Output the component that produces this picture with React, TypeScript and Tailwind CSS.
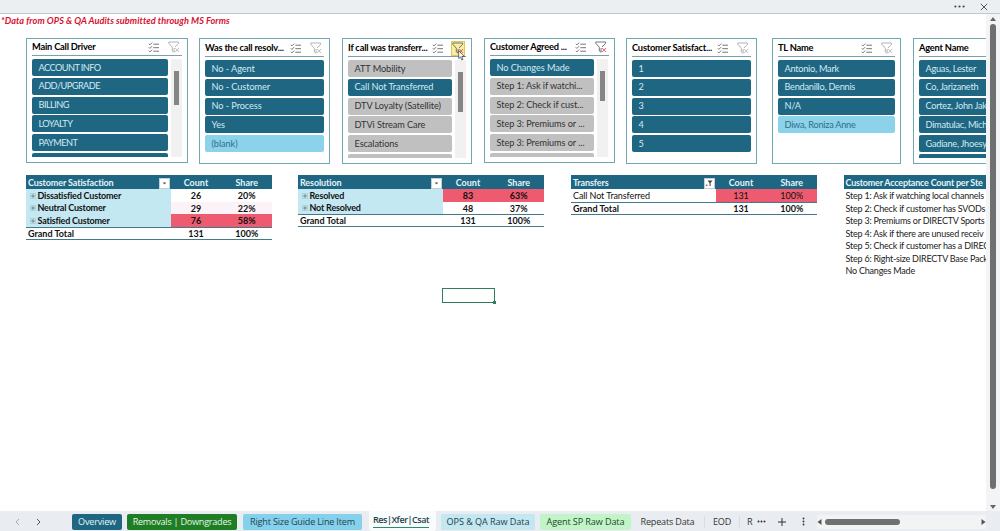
import React from "react";
import clsx from "clsx";

type State = "on" | "off" | "empty";

type SlicerProps = {
  title: string;
  items: [string, State][];
  className: string;
  listClassName: string;
  more?: "on" | "off";
  thumb?: string;
  filtered?: boolean;
  hovered?: boolean;
};

const itemColors = {
  on: "bg-[#1e6682] text-[#d3eaf2]",
  off: "bg-[#c0c0c0] text-[#333333]",
  empty: "bg-[#8bd2ea] text-[#2e7187]",
};

const MultiSelectIcon = () => (
  <svg viewBox="0 0 12 11" className="w-3 h-[11px] shrink-0" fill="none" stroke="#666" strokeWidth="0.9">
    <path d="M.8 1.8l1.1 1.1L4.2.6M.8 5.3l1.1 1.1 2.3-2.3M.8 8.8l1.1 1.1 2.3-2.3" />
    <path d="M5.3 2.2H11M5.3 5.7H11M5.3 9.2H11" />
  </svg>
);

const ClearFilterIcon = ({ active }: { active?: boolean }) => (
  <svg viewBox="0 0 12 12" className="w-3 h-3 shrink-0" fill="none" strokeWidth="0.9">
    <path d="M.8 1h9.8v1.3L7 6M.8 1v1.3l3.5 3.9V10l1.8 1.2V7" stroke={active ? "#666" : "#aaa"} />
    <path d="M7.2 7l3.9 4M11.1 7L7.2 11" stroke={active ? "#df4b62" : "#b5b5b5"} />
  </svg>
);

const Slicer = ({ title, items, className, listClassName, more, thumb, filtered, hovered }: SlicerProps) => (
  <div className={clsx("shrink-0 border border-[#6fa8ae] bg-white px-[5px]", className)}>
    <div className="relative flex items-center h-[17px] border-b border-[#7d9eaa] pr-px">
      <span className="flex-1 whitespace-nowrap text-[9.3px] font-bold tracking-[-0.22px] text-black">{title}</span>
      <MultiSelectIcon />
      <span
        className={clsx(
          "ml-[7px] flex h-[15px] w-[14px] shrink-0 items-center justify-center",
          hovered && "bg-[#f8eea0] border border-[#dcc95c]"
        )}
      >
        <ClearFilterIcon active={filtered} />
      </span>
      {hovered && (
        <svg viewBox="0 0 7 11" className="absolute right-[1px] top-[10px] z-10 w-[7px] h-[11px]">
          <path d="M.7.6v8l1.8-1.7 1.2 3 1.3-.6-1.2-2.8h2.5z" fill="white" stroke="#333" strokeWidth="0.7" />
        </svg>
      )}
    </div>
    <div className="flex mt-[3px]">
      <div className={clsx("flex flex-col gap-[1.8px] overflow-hidden tracking-[-0.08px]", listClassName)}>
        {items.map(([label, state], i) => (
          <div
            key={i}
            className={clsx(
              "flex h-[17px] shrink-0 items-center whitespace-nowrap rounded-[2px] pl-[6.5px] text-[9.2px]",
              itemColors[state]
            )}
          >
            {label}
          </div>
        ))}
        {more && <div className={clsx("h-1 shrink-0 rounded-t-[2px]", itemColors[more])} />}
      </div>
      {thumb && (
        <div className="ml-[3px] w-[11px] bg-[#f1f1f1]">
          <div className={clsx("mx-auto w-[4.5px] bg-[#858585]", thumb)} />
        </div>
      )}
    </div>
  </div>
);

type Row = { label: string; count: string; share: string; heat: string };

const Pivot = ({
  title,
  rows,
  total,
  grouped,
  className,
}: {
  title: string;
  rows: Row[];
  total: string;
  grouped?: boolean;
  className: string;
}) => (
  <div className={clsx("w-[246px] shrink-0 text-[9px] leading-[14px] text-[#111]", className)}>
    <div className="grid grid-cols-[144.5px_51px_50.5px] h-[14px] items-center bg-[#1e6682] font-bold text-[#e4f5fa]">
      <div className="flex items-center justify-between pl-[2px] pt-px tracking-[-0.12px]">
        {title}
        <span className="mr-px flex h-[11px] w-[11px] items-center justify-center border border-[#c5ced2] bg-white">
          {grouped ? (
            <svg viewBox="0 0 6 6" className="w-[5px] h-[5px]">
              <path d="M.8 1.8h4.4L3 4.2z" fill="#555" />
            </svg>
          ) : (
            <svg viewBox="0 0 8 8" className="w-2 h-2">
              <path d="M2.5 1.5h5L5.6 4v3H4.5V4z" fill="#444" />
              <path d="M.5 5.8h2.4L1.7 7.2z" fill="#444" />
            </svg>
          )}
        </span>
      </div>
      <div className="pt-px text-center">Count</div>
      <div className="pt-px text-center">Share</div>
    </div>
    {rows.map((row) => (
      <div
        key={row.label}
        className={clsx("grid grid-cols-[144.5px_51px_50.5px] h-[12.5px]", grouped && "font-bold")}
      >
        <div
          className={clsx(
            "flex h-[12.5px] items-center whitespace-nowrap pt-px",
            grouped ? "bg-[#c4e8f1] pl-[4px] tracking-[-0.2px]" : "pl-[2px] tracking-[-0.1px]"
          )}
        >
          {grouped && (
            <svg viewBox="0 0 6 6" className="mr-[1.5px] w-[6px] h-[6px]" fill="none">
              <path d="M.4.4h5.2v5.2H.4z" stroke="#9dbcc5" strokeWidth="0.6" />
              <path d="M1.2 3h3.6M3 1.2v3.6" stroke="#55717b" strokeWidth="0.8" />
            </svg>
          )}
          {row.label}
        </div>
        <div className={clsx("h-[12.5px] text-center", row.heat)}>{row.count}</div>
        <div className={clsx("h-[12.5px] text-center", row.heat)}>{row.share}</div>
      </div>
    ))}
    <div className="grid grid-cols-[144.5px_51px_50.5px] h-[13px] border-y border-[#44798b] font-bold leading-[11.5px]">
      <div className="pl-[2px]">Grand Total</div>
      <div className="text-center">{total}</div>
      <div className="text-center">100%</div>
    </div>
  </div>
);

const steps = [
  "Step 1: Ask if watching local channels",
  "Step 2: Check if customer has SVODs",
  "Step 3: Premiums or DIRECTV Sports",
  "Step 4: Ask if there are unused receiv",
  "Step 5: Check if customer has a DIREC",
  "Step 6: Right-size DIRECTV Base Pack",
  "No Changes Made",
];

const slicers: SlicerProps[] = [
  {
    title: "Main Call Driver",
    className: "ml-[26px] w-[162px] h-[125px]",
    listClassName: "w-[136px] h-[98px] tracking-[-0.55px]",
    more: "on",
    thumb: "mt-3 h-[34px]",
    items: [["ACCOUNT INFO", "on"], ["ADD/UPGRADE", "on"], ["BILLING", "on"], ["LOYALTY", "on"], ["PAYMENT", "on"]],
  },
  {
    title: "Was the call resolv...",
    className: "ml-[11px] w-[131px] h-[126px] pt-px",
    listClassName: "w-full",
    items: [["No - Agent", "on"], ["No - Customer", "on"], ["No - Process", "on"], ["Yes", "on"], ["(blank)", "empty"]],
  },
  {
    title: "If call was transferr...",
    className: "ml-[12px] w-[130px] h-[126px] pt-px",
    listClassName: "w-[104px] h-[98px]",
    more: "off",
    thumb: "mt-3 h-10",
    filtered: true,
    hovered: true,
    items: [
      ["ATT Mobility", "off"],
      ["Call Not Transferred", "on"],
      ["DTV Loyalty (Satellite)", "off"],
      ["DTVi Stream Care", "off"],
      ["Escalations", "off"],
    ],
  },
  {
    title: "Customer Agreed ...",
    className: "ml-[12px] w-[131px] h-[125px]",
    listClassName: "w-[104px] h-[98px]",
    more: "off",
    thumb: "mt-3 h-[30px]",
    filtered: true,
    items: [
      ["No Changes Made", "on"],
      ["Step 1: Ask if watchi...", "off"],
      ["Step 2: Check if cust...", "off"],
      ["Step 3: Premiums or ...", "off"],
      ["Step 3: Premiums or ...", "off"],
    ],
  },
  {
    title: "Customer Satisfact...",
    className: "ml-[11px] w-[131px] h-[126px] pt-px",
    listClassName: "w-full",
    items: [["1", "on"], ["2", "on"], ["3", "on"], ["4", "on"], ["5", "on"]],
  },
  {
    title: "TL Name",
    className: "ml-[15px] w-[129px] h-[126px] pt-px",
    listClassName: "w-full tracking-[-0.25px]",
    items: [["Antonio, Mark", "on"], ["Bendanillo, Dennis", "on"], ["N/A", "on"], ["Diwa, Roniza Anne", "empty"]],
  },
  {
    title: "Agent Name",
    className: "ml-[12px] w-[131px] h-[126px] pt-px",
    listClassName: "w-[104px] h-[98px] tracking-[-0.25px]",
    more: "on",
    items: [
      ["Aguas, Lester", "on"],
      ["Co, Jarizaneth", "on"],
      ["Cortez, John Jak", "on"],
      ["Dimatulac, Mich", "on"],
      ["Gadiane, Jhoesy", "on"],
    ],
  },
];

const Divider = () => <div className="h-3 w-px shrink-0 bg-[#d9dce0]" />;

const tab = "flex h-4 shrink-0 items-center justify-center whitespace-nowrap rounded-[2px]";

const App = () => {
  return (
    <div className="flex h-[531px] w-[1000px] flex-col overflow-hidden bg-[#eceff2] font-['Lato',sans-serif]">
      <div className="flex h-[14px] shrink-0 items-center justify-end gap-[15px] border-b border-[#c4c6c9] pr-[12px]">
        <svg viewBox="0 0 11 3" className="w-[11px] h-[3px]" fill="#444">
          <circle cx="1.4" cy="1.5" r="1.1" />
          <circle cx="5.5" cy="1.5" r="1.1" />
          <circle cx="9.6" cy="1.5" r="1.1" />
        </svg>
        <svg viewBox="0 0 8 8" className="w-2 h-2" stroke="#555" strokeWidth="1">
          <path d="M.8.8l6.4 6.4M7.2.8L.8 7.2" />
        </svg>
      </div>

      <div className="flex h-[497px] shrink-0">
        <main className="relative w-[986px] shrink-0 overflow-hidden bg-white">
          <p className="h-6 pl-px pt-px text-[9.2px] font-bold italic leading-[11px] tracking-[0.05px] text-[#d8102f]">
            *Data from OPS &amp; QA Audits submitted through MS Forms
          </p>
          <div className="flex h-[137px] items-start">
            {slicers.map((s) => (
              <Slicer key={s.title} {...s} />
            ))}
          </div>
          <div className="flex items-start">
            <Pivot
              className="ml-[26px]"
              title="Customer Satisfaction"
              grouped
              total="131"
              rows={[
                { label: "Dissatisfied Customer", count: "26", share: "20%", heat: "bg-white" },
                { label: "Neutral Customer", count: "29", share: "22%", heat: "bg-[#fcf3f8]" },
                { label: "Satisfied Customer", count: "76", share: "58%", heat: "bg-[#ee5a6f]" },
              ]}
            />
            <Pivot
              className="ml-[26px]"
              title="Resolution"
              grouped
              total="131"
              rows={[
                { label: "Resolved", count: "83", share: "63%", heat: "bg-[#ee5a6f]" },
                { label: "Not Resolved", count: "48", share: "37%", heat: "bg-white" },
              ]}
            />
            <Pivot
              className="ml-[27px]"
              title="Transfers"
              total="131"
              rows={[{ label: "Call Not Transferred", count: "131", share: "100%", heat: "bg-[#ee5a6f]" }]}
            />
            <div className="ml-[26.5px] w-[200px] shrink-0 whitespace-nowrap text-[9px] leading-[14px] tracking-[-0.22px] text-[#222]">
              <div className="h-[14px] bg-[#1e6682] pl-[2px] font-bold leading-[16px] text-[#e4f5fa]">
                Customer Acceptance Count per Ste
              </div>
              {steps.map((step) => (
                <div key={step} className="h-[12.5px] pl-[2px]">
                  {step}
                </div>
              ))}
            </div>
          </div>
          <div className="absolute left-[442px] top-[274px] h-[15px] w-[53px] border border-[#2f7d5b]">
            <div className="absolute -bottom-[2px] -right-[2px] h-[3px] w-[3px] bg-[#2f7d5b]" />
          </div>
        </main>
        <div className="flex flex-1 flex-col items-center bg-[#f3f4f5] pt-[3px] pb-px">
          <svg viewBox="0 0 6 4" className="w-[6px] h-1 shrink-0">
            <path d="M3 0l3 4H0z" fill="#666" />
          </svg>
          <div className="mt-[3px] h-[465px] w-[6px] rounded-full bg-[#707070]" />
          <svg viewBox="0 0 6 4" className="mt-auto mb-px w-[6px] h-1 shrink-0">
            <path d="M3 4l3-4H0z" fill="#666" />
          </svg>
        </div>
      </div>

      <footer className="flex h-5 shrink-0 items-center bg-[#e9ecf0] pt-px font-['Open_Sans',sans-serif] text-[9.1px] tracking-[-0.2px] text-[#333]">
        <svg viewBox="0 0 28 8" className="ml-[14px] mr-[29px] h-2 w-7 shrink-0" fill="none" strokeWidth="1">
          <path d="M5 1L2 4l3 3" stroke="#aaa" />
          <path d="M23 1l3 3-3 3" stroke="#555" />
        </svg>
        <div className={clsx(tab, "ml-px w-[50px] bg-[#1e6682] text-[#e4f5fa]")}>Overview</div>
        <div className={clsx(tab, "ml-[5px] w-[110px] bg-[#1f7d26] tracking-[-0.25px] text-[#e7f8e7]")}>
          Removals | Downgrades
        </div>
        <div className={clsx(tab, "ml-[6px] w-[119px] bg-[#85d0ea] text-[#1d4454]")}>Right Size Guide Line Item</div>
        <div className="ml-[7px] -mt-px flex h-5 w-[67px] shrink-0 items-start rounded-b-[3px] bg-[#f8fcfc] pl-[4px]">
          <span className="mt-[2px] h-[15px] whitespace-nowrap border-b border-[#2f8a64] text-[9px] font-semibold leading-[13px] tracking-[-0.45px] text-[#24414a]">
            Res|Xfer|Csat
          </span>
        </div>
        <div className={clsx(tab, "ml-[5px] w-[94px] bg-[#c4e8f1] tracking-[-0.07px] text-[#24414a]")}>
          OPS &amp; QA Raw Data
        </div>
        <div className={clsx(tab, "ml-[5px] w-[91px] bg-[#c1f4c6] tracking-[-0.12px] text-[#24472a]")}>
          Agent SP Raw Data
        </div>
        <div className={clsx(tab, "w-[73px]")}>Repeats Data</div>
        <Divider />
        <div className={clsx(tab, "w-[34px]")}>EOD</div>
        <Divider />
        <span className="ml-[7px] w-[10px]">R</span>
        <svg viewBox="0 0 9 3" className="h-[3px] w-[9px] shrink-0" fill="#333">
          <circle cx="1.5" cy="1.5" r="1" />
          <circle cx="4.5" cy="1.5" r="1" />
          <circle cx="7.5" cy="1.5" r="1" />
        </svg>
        <svg viewBox="0 0 8 8" className="ml-[12px] h-2 w-2 shrink-0" stroke="#333">
          <path d="M4 0v8M0 4h8" />
        </svg>
        <svg viewBox="0 0 3 9" className="ml-[16px] h-[9px] w-[3px] shrink-0" fill="#333">
          <circle cx="1.5" cy="1.5" r="0.9" />
          <circle cx="1.5" cy="4.5" r="0.9" />
          <circle cx="1.5" cy="7.5" r="0.9" />
        </svg>
        <div className="ml-[12px] flex h-[14px] w-[169px] shrink-0 items-center bg-[#f1f3f5]">
          <svg viewBox="0 0 4 6" className="h-[6px] w-[5px]">
            <path d="M4 0v6L0 3z" fill="#555" />
          </svg>
          <div className="ml-[3px] h-[6px] w-[75px] rounded-full bg-[#707070]" />
          <svg viewBox="0 0 4 6" className="ml-auto h-[6px] w-[5px]">
            <path d="M0 0v6l4-3z" fill="#555" />
          </svg>
        </div>
      </footer>
    </div>
  );
};

export default App;
